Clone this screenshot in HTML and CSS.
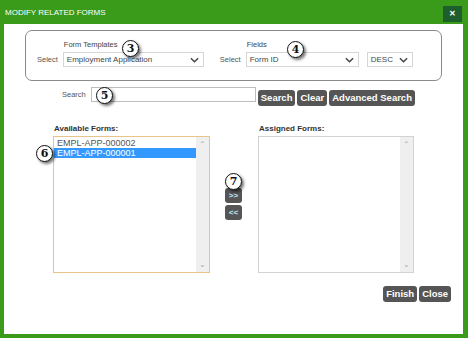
FILE: index.html
```html
<!DOCTYPE html>
<html lang="en">
<head>
    <meta charset="UTF-8">
    <title>Modify Related Forms</title>
    <link rel="stylesheet" href="styles.css">
</head>
<body>
<div class="dialogo">
    <div class="titulo">
        <span>MODIFY RELATED FORMS</span>
        <button class="cerrar">&#x2715;</button>
    </div>

    <div class="contenido">
        <div class="filtros">
            <div class="grupo">
                <span class="etiqueta">Select</span>
                <div class="campo">
                    <span class="sub">Form Templates</span>
                    <div class="combo ancho-1"><span>Employment Application</span><svg class="flecha" viewBox="0 0 10 6"><path d="M1 1l4 4 4-4" fill="none" stroke="#444" stroke-width="1.6"/></svg></div>
                </div>
            </div>
            <div class="grupo">
                <span class="etiqueta">Select</span>
                <div class="campo">
                    <span class="sub">Fields</span>
                    <div class="combo ancho-2"><span>Form ID</span><svg class="flecha" viewBox="0 0 10 6"><path d="M1 1l4 4 4-4" fill="none" stroke="#444" stroke-width="1.6"/></svg></div>
                </div>
                <div class="combo ancho-3"><span>DESC</span><svg class="flecha" viewBox="0 0 10 6"><path d="M1 1l4 4 4-4" fill="none" stroke="#444" stroke-width="1.6"/></svg></div>
            </div>
        </div>

        <div class="busqueda">
            <span class="etiqueta">Search</span>
            <div class="entrada"></div>
            <div class="acciones">
                <button class="boton">Search</button>
                <button class="boton">Clear</button>
                <button class="boton">Advanced Search</button>
            </div>
        </div>

        <div class="listas">
            <div class="columna">
                <span class="rotulo">Available Forms:</span>
                <div class="caja activa">
                    <div class="items">
                        <div class="item">EMPL-APP-000002</div>
                        <div class="item elegido">EMPL-APP-000001</div>
                    </div>
                    <div class="barra"><span class="chev">&#x2303;</span><span class="chev abajo">&#x2304;</span></div>
                </div>
            </div>
            <div class="medio">
                <button class="boton chico">&gt;&gt;</button>
                <button class="boton chico">&lt;&lt;</button>
            </div>
            <div class="columna">
                <span class="rotulo">Assigned Forms:</span>
                <div class="caja">
                    <div class="items"></div>
                    <div class="barra"><span class="chev">&#x2303;</span><span class="chev abajo">&#x2304;</span></div>
                </div>
            </div>
        </div>

        <div class="pie">
            <button class="boton">Finish</button>
            <button class="boton">Close</button>
        </div>

        <!-- marcas numeradas -->
        <span class="marca m3">3</span>
        <span class="marca m4">4</span>
        <span class="marca m5">5</span>
        <span class="marca m6">6</span>
        <span class="marca m7">7</span>
    </div>
</div>
</body>
</html>
```

FILE: styles.css
```css
body {
    margin: 0;
    font-family: 'Liberation Sans', Arial, sans-serif;
    background: #3a9a1a;
    width: 468px;
    height: 338px;
    overflow: hidden;
}

.dialogo {
    width: 468px;
    height: 338px;
    display: flex;
    flex-direction: column;
}

.titulo {
    height: 24px;
    display: flex;
    align-items: center;
    justify-content: space-between;
    padding: 0 6px 0 5px;
    color: #fff;
    font-size: 8px;
}

.titulo span {
    margin-top: 1px;
}

.cerrar {
    width: 19px;
    height: 16px;
    margin-top: 3px;
    background: #1d5e2c;
    border: none;
    color: #fff;
    font-size: 8px;
    font-weight: bold;
    padding: 0;
}

.contenido {
    position: relative;
    margin: 0 5px 0 4px;
    height: 310px;
    background: #fff;
    display: flex;
    flex-direction: column;
}

/* bloque de filtros */
.filtros {
    margin: 6px 0 0 21px;
    width: 417px;
    height: 51px;
    box-sizing: border-box;
    border: 1px solid #8a8a8a;
    border-radius: 7px;
    display: flex;
    align-items: flex-end;
    padding: 0 0 13px 11px;
}

.grupo {
    display: flex;
    align-items: flex-end;
}

.grupo + .grupo {
    margin-left: 16px;
}

.etiqueta {
    font-size: 7.5px;
    color: #555;
    margin-right: 5px;
    line-height: 15px;
}

.campo {
    display: flex;
    flex-direction: column;
}

.sub {
    font-size: 7.5px;
    color: #444;
    margin: 0 0 3px 1px;
}

.combo {
    height: 15px;
    box-sizing: border-box;
    border: 1px solid #d6d6d6;
    display: flex;
    align-items: center;
    justify-content: space-between;
    padding: 0 4px 0 3px;
    font-size: 8px;
    color: #444;
}

.flecha {
    width: 9px;
    height: 6px;
}

.ancho-1 { width: 141px; }
.ancho-2 { width: 113px; }
.ancho-3 { width: 46px; margin-left: 8px; }

/* busqueda */
.busqueda {
    display: flex;
    align-items: flex-start;
    margin: 6px 0 0 58px;
}

.busqueda .etiqueta {
    line-height: 15px;
    margin-right: 5px;
}

.entrada {
    width: 165px;
    height: 15px;
    box-sizing: border-box;
    border: 1px solid #bdbdbd;
}

.acciones {
    display: flex;
    gap: 2px;
    margin: 3px 0 0 2px;
}

.boton {
    background: #555;
    color: #fff;
    border: none;
    border-radius: 3px;
    font-family: 'Liberation Sans', Arial, sans-serif;
    font-weight: bold;
    font-size: 9.5px;
    height: 16px;
    padding: 0 3px;
    line-height: 16px;
}

/* listas */
.listas {
    display: flex;
    margin: 18px 0 0 49px;
}

.columna {
    display: flex;
    flex-direction: column;
}

.rotulo {
    font-size: 8px;
    font-weight: bold;
    color: #333;
    height: 10px;
    margin-bottom: 2px;
    padding-left: 1px;
}

.caja {
    width: 156px;
    height: 137px;
    box-sizing: border-box;
    border: 1px solid #d2d2d2;
    display: flex;
}

.caja.activa {
    width: 157px;
    border-color: #e8c48a;
}

.items {
    flex: 1;
    padding-top: 1px;
}

.item {
    font-size: 9px;
    color: #555;
    height: 10px;
    line-height: 10px;
    padding-left: 3px;
}

.item.elegido {
    background: #3399ff;
    color: #fff;
}

.barra {
    width: 13px;
    background: #efefef;
    display: flex;
    flex-direction: column;
    justify-content: space-between;
    align-items: center;
    color: #aaa;
    font-size: 8px;
}

.chev {
    line-height: 10px;
    margin-top: 3px;
}

.chev.abajo {
    margin: 0 0 2px;
}

.medio {
    display: flex;
    flex-direction: column;
    gap: 2px;
    margin: 64px 16px 0 15px;
}

.boton.chico {
    width: 17px;
    height: 15px;
    padding: 0;
    font-size: 8px;
    line-height: 15px;
    color: #bfe6ff;
}

.pie {
    display: flex;
    justify-content: flex-end;
    gap: 2px;
    margin: 13px 12px 0 0;
}

/* marcas numeradas */
.marca {
    position: absolute;
    width: 15px;
    height: 15px;
    border: 1.5px solid #111;
    border-radius: 50%;
    background: #fff;
    box-shadow: 2px 2px 3px rgba(0, 0, 0, 0.55);
    font-family: 'DejaVu Serif', serif;
    font-weight: bold;
    font-size: 11px;
    line-height: 15px;
    text-align: center;
    color: #111;
}

.m3 { left: 118px; top: 16px; }
.m4 { left: 283px; top: 17px; }
.m5 { left: 92px; top: 63px; }
.m6 { left: 32px; top: 121px; }
.m7 { left: 221px; top: 149px; }
```
